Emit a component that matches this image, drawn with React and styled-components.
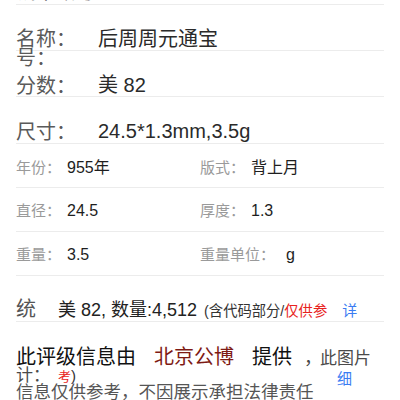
import React from 'react';
import styled, { createGlobalStyle } from 'styled-components';

const GlobalStyle = createGlobalStyle`
    html, body {
        margin: 0;
        padding: 0;
        background: #fff;
        overflow: hidden;
    }
    body {
        font-family: "Liberation Sans", "Noto Sans CJK SC", sans-serif;
        color: #222;
    }
`;

const infoItems = [
    [{ label: '年份：', value: '955年' }, { label: '版式：', value: '背上月' }],
    [{ label: '直径：', value: '24.5' }, { label: '厚度：', value: '1.3' }],
    [{ label: '重量：', value: '3.5' }, { label: '重量单位：', value: 'g', gap: 11 }],
];

function App() {
    return (
        <Page>
            <GlobalStyle />
            <BigRow $top>
                <Label>钱币编号</Label>
            </BigRow>
            <BigRow>
                <Label>
                    <LabelLine>名称：</LabelLine>
                    <LabelLine>号：</LabelLine>
                </Label>
                <Value>后周周元通宝</Value>
            </BigRow>
            <BigRow>
                <Label>分数：</Label>
                <Value>美 82</Value>
            </BigRow>
            <BigRow $tall>
                <Label>尺寸：</Label>
                <Value>24.5*1.3mm,3.5g</Value>
            </BigRow>

            {infoItems.map((row, i) => (
                <GridRow key={i}>
                    {row.map((item) => (
                        <Cell key={item.label}>
                            <SmallLabel>{item.label}</SmallLabel>
                            <SmallValue $gap={item.gap}>{item.value}</SmallValue>
                        </Cell>
                    ))}
                </GridRow>
            ))}

            <StatRow>
                <StatLabel>统</StatLabel>
                <StatMain>美 82, 数量:4,512</StatMain>
                <StatNote>(含代码部分/<Red>仅供参</Red></StatNote>
                <Link>详</Link>
            </StatRow>

            <Source>
                <SourceLine>
                    <Strong>此评级信息由</Strong>
                    <Company>北京公博</Company>
                    <Strong>提供</Strong>
                    <Comma>，</Comma>
                    <Muted>此图片</Muted>
                </SourceLine>
                <OverlapLine>
                    <Muted>计：</Muted>
                    <SmallRed>考</SmallRed>
                    <Paren>)</Paren>
                    <LinkLate>细</LinkLate>
                </OverlapLine>
                <Disclaimer>信息仅供参考，不因展示承担法律责任</Disclaimer>
            </Source>
        </Page>
    );
}

const Page = styled.div`
    padding: 0 16px;
    width: 400px;
    height: 400px;
    box-sizing: border-box;
    overflow: hidden;
`;

const BigRow = styled.div`
    display: flex;
    align-items: flex-start;
    height: ${(p) => (p.$tall ? '47px' : '46px')};
    padding-top: ${(p) => (p.$top ? '21px' : '23px')};
    margin-top: ${(p) => (p.$top ? '-41px' : '0')};
    box-sizing: border-box;
    border-bottom: 1px solid #ececec;
    font-size: 20px;
    line-height: 22px;
`;

const Label = styled.div`
    width: 82px;
    flex-shrink: 0;
    color: #5a5a5a;
    font-family: "Noto Sans CJK SC", sans-serif;
    font-size: 20px;
`;

const LabelLine = styled.div`
    line-height: 19px;
    white-space: nowrap;
`;

const Value = styled.div`
    color: #2a2a2a;
    font-size: 20px;
    white-space: nowrap;
`;

const GridRow = styled.div`
    display: grid;
    grid-template-columns: 184px 1fr;
    align-items: center;
    height: 44px;
    box-sizing: border-box;
    border-bottom: 1px solid #ececec;
`;

const Cell = styled.div`
    display: flex;
    align-items: baseline;
`;

const SmallLabel = styled.span`
    color: #9a9a9a;
    font-size: 15px;
    font-family: "Noto Sans CJK SC", sans-serif;
`;

const SmallValue = styled.span`
    color: #1e1e1e;
    font-size: 16px;
    margin-left: ${(p) => p.$gap || 6}px;
`;

const StatRow = styled.div`
    display: flex;
    align-items: baseline;
    height: 46px;
    padding-top: 17px;
    box-sizing: border-box;
    border-bottom: 1px solid #ececec;
    white-space: nowrap;
`;

const StatLabel = styled.span`
    color: #555;
    font-size: 20px;
    font-family: "Noto Sans CJK SC", sans-serif;
    width: 42px;
`;

const StatMain = styled.span`
    color: #222;
    font-size: 18px;
`;

const StatNote = styled.span`
    color: #333;
    font-size: 14.3px;
    margin-left: 7px;
`;

const Red = styled.span`
    color: #e8231d;
`;

const Link = styled.span`
    color: #3a7cf2;
    font-size: 15px;
    margin-left: 15px;
`;

const Source = styled.div`
    padding-top: 23px;
`;

const SourceLine = styled.div`
    display: flex;
    align-items: baseline;
    height: 19px;
    line-height: 22px;
    white-space: nowrap;
`;

const Strong = styled.span`
    color: #111;
    font-size: 20px;
    font-family: "Noto Sans CJK SC", sans-serif;
    margin-right: 18px;
`;

const Company = styled.span`
    color: #7e1a14;
    font-size: 20px;
    font-family: "Noto Sans CJK SC", sans-serif;
    margin-right: 18px;
`;

const Comma = styled.span`
    color: #444;
    font-size: 18px;
    margin: 0 -2px 0 -6px;
`;

const Muted = styled.span`
    color: #4a4a4a;
    font-size: 17px;
    font-family: "Noto Sans CJK SC", sans-serif;
`;

const OverlapLine = styled.div`
    display: flex;
    align-items: baseline;
    height: 17px;
    line-height: 20px;
    white-space: nowrap;
`;

const SmallRed = styled.span`
    color: #e8231d;
    font-size: 13px;
    margin-left: 8px;
`;

const Paren = styled.span`
    color: #333;
    font-size: 15px;
`;

const LinkLate = styled.span`
    color: #3a7cf2;
    font-size: 15px;
    margin-left: auto;
    margin-right: 32px;
    transform: translateY(3px);
`;

const Disclaimer = styled.div`
    color: #555;
    font-size: 17.5px;
    line-height: 20px;
    font-family: "Noto Sans CJK SC", sans-serif;
    white-space: nowrap;
`;

export default App;
